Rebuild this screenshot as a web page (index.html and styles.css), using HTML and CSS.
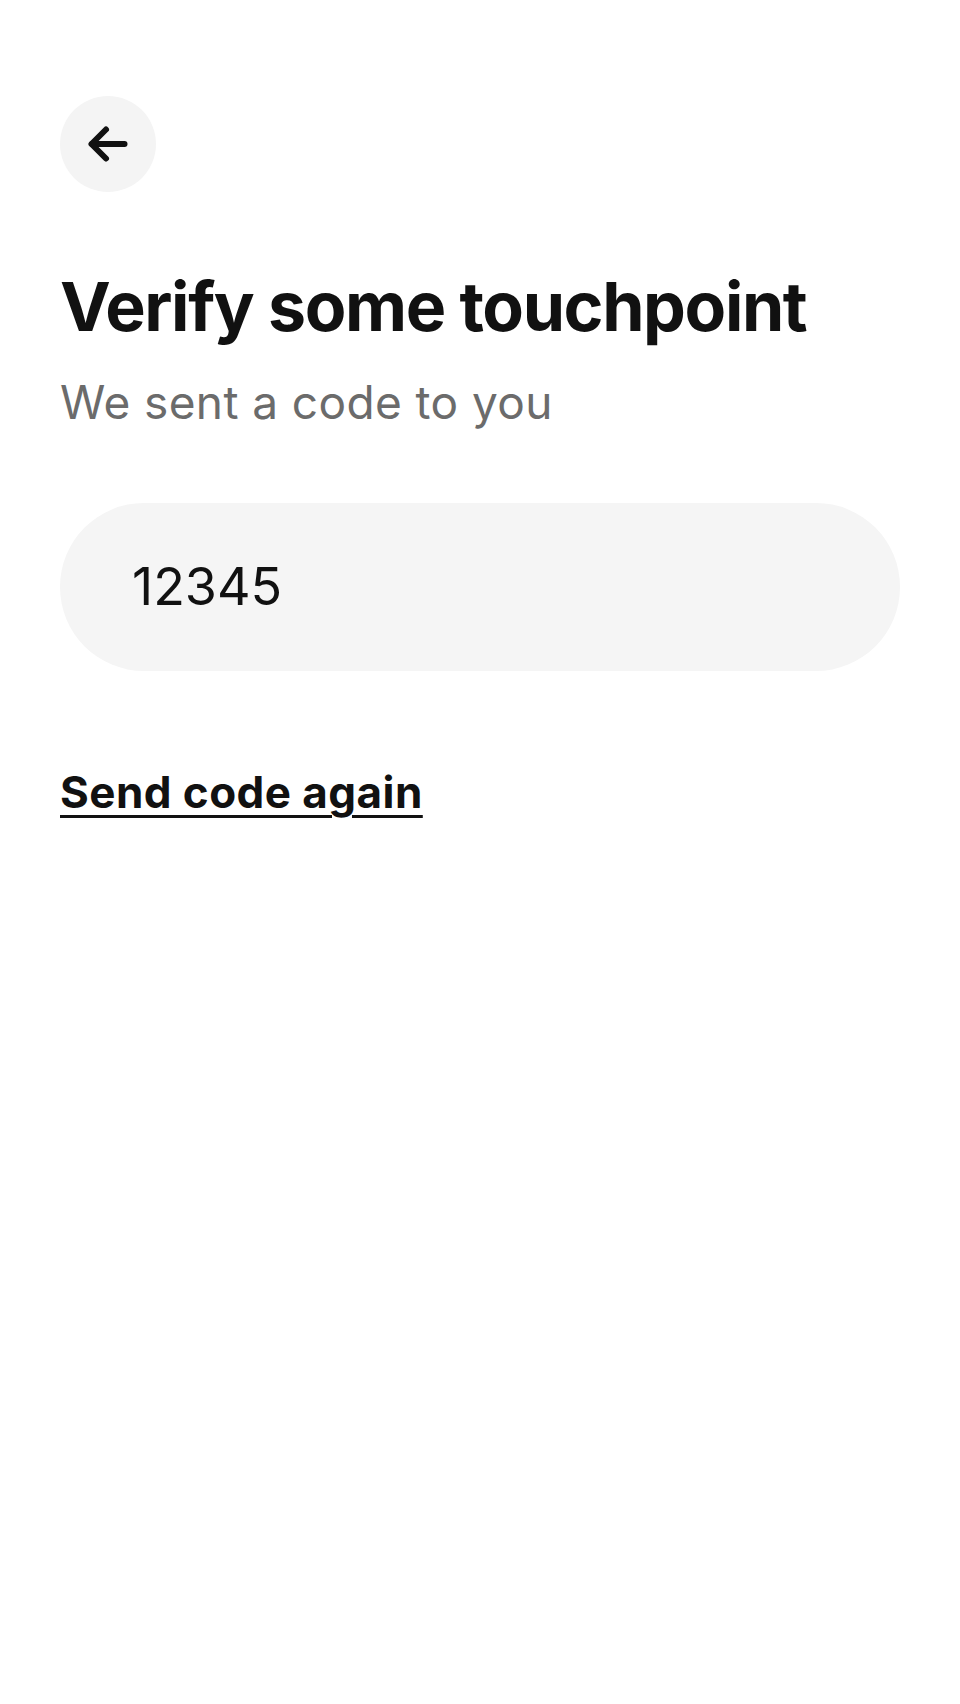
FILE: index.html
```html
<!DOCTYPE html>
<html lang="en">
<head>
<meta charset="utf-8">
<title>Verify some touchpoint</title>
<link rel="stylesheet" href="styles.css">
</head>
<body>
<main class="screen">
  <button class="back" type="button" aria-label="Back">
    <svg class="back-icon" width="48" height="48" viewBox="0 0 48 48" fill="none" stroke="#111111" stroke-width="6" stroke-linecap="round" stroke-linejoin="round">
      <path d="M8 24 H40.5"/>
      <path d="M22 9.5 L7.5 24 L22 38.5"/>
    </svg>
  </button>
  <h1 class="title">Verify some touchpoint</h1>
  <p class="subtitle">We sent a code to you</p>
  <div class="field">
    <span class="field-value">12345</span>
  </div>
  <a class="resend" href="#">Send code again</a>
</main>
</body>
</html>
```
FILE: styles.css
```css
html, body {
  margin: 0;
  padding: 0;
  background: #ffffff;
}

body {
  font-family: Inter, "Noto Sans", "Liberation Sans", sans-serif;
  color: #111111;
}

.screen {
  display: flex;
  flex-direction: column;
  align-items: flex-start;
  padding: 96px 60px 0 60px;
}

.back {
  width: 96px;
  height: 96px;
  border-radius: 50%;
  border: 0;
  padding: 0;
  background: #f4f4f4;
  display: flex;
  align-items: center;
  justify-content: center;
}

.back-icon {
  display: block;
}

.title {
  margin: 74px 0 0 0;
  font-size: 68px;
  line-height: 1.2;
  font-weight: 700;
  letter-spacing: -1.4px;
  color: #111111;
}

.subtitle {
  margin: 25px 0 0 0;
  font-size: 46px;
  line-height: 1.3;
  font-weight: 400;
  letter-spacing: 0.4px;
  color: #6b6b6b;
}

.field {
  align-self: stretch;
  margin-top: 71px;
  height: 168px;
  border-radius: 84px;
  background: #f5f5f5;
  display: flex;
  align-items: center;
  padding: 0 72px;
}

.field-value {
  font-size: 52px;
  line-height: 1.2;
  color: #111111;
}

.resend {
  margin-top: 95px;
  font-size: 44px;
  line-height: 1.2;
  font-weight: 700;
  letter-spacing: 0.45px;
  color: #111111;
  text-decoration: underline;
  text-decoration-thickness: 3px;
  text-underline-offset: 7px;
}
```
